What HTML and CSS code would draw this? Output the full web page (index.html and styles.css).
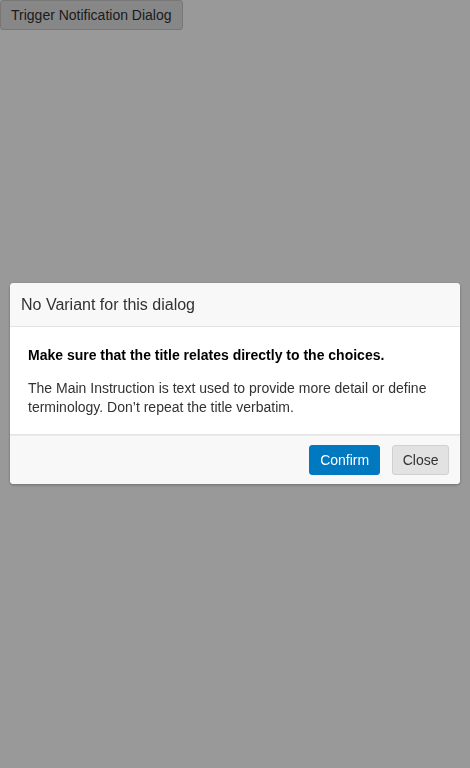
FILE: index.html
```html
<!DOCTYPE html>
<html>
<head>
<meta charset="utf-8">
<link rel="stylesheet" href="styles.css">
</head>
<body>
<button class="trigger">Trigger Notification Dialog</button>
<div class="overlay">
  <div class="dialog">
    <div class="dialog-header">No Variant for this dialog</div>
    <div class="dialog-body">
      <p class="main">Make sure that the title relates directly to the choices.</p>
      <p class="desc">The Main Instruction is text used to provide more detail or define terminology. Don’t repeat the title verbatim.</p>
    </div>
    <div class="dialog-footer">
      <button class="btn btn-primary">Confirm</button>
      <button class="btn btn-secondary">Close</button>
    </div>
  </div>
</div>
</body>
</html>
```
FILE: styles.css
```css
html, body {
  margin: 0;
  padding: 0;
  height: 100%;
}
body {
  font-family: "Liberation Sans", Arial, sans-serif;
  background: #fff;
  color: #000;
}
.trigger {
  font-family: inherit;
  font-size: 14px;
  color: #303030;
  background: #e2e2e2;
  border: 1px solid #c6c6c6;
  border-radius: 3px;
  height: 30px;
  padding: 0 10px;
  margin: 0;
}
.overlay {
  position: fixed;
  inset: 0;
  background: rgba(0, 0, 0, 0.4);
  display: flex;
  align-items: flex-start;
  justify-content: center;
  padding-top: 283px;
}
.dialog {
  width: 450px;
  background: #fff;
  border-radius: 4px;
  box-shadow: 0 1px 3px rgba(0, 0, 0, 0.3);
  overflow: hidden;
}
.dialog-header {
  background: #f8f8f8;
  border-bottom: 1px solid #e4e4e4;
  font-size: 16px;
  color: #323232;
  height: 43px;
  line-height: 43px;
  padding: 0 11px;
}
.dialog-body {
  padding: 19px 18px 17px;
  border-bottom: 1px solid #e4e4e4;
  font-size: 14px;
  line-height: 19px;
  color: #323232;
}
.dialog-body p {
  margin: 0;
}
.dialog-body .main {
  font-weight: bold;
  color: #000;
  margin-bottom: 14px;
}
.dialog-footer {
  background: #f8f8f8;
  border-top: 1px solid #ececec;
  display: flex;
  justify-content: flex-end;
  gap: 12px;
  padding: 9px 11px 9px;
}
.btn {
  font-family: inherit;
  font-size: 14px;
  height: 30px;
  border-radius: 3px;
  padding: 0 10px;
  margin: 0;
}
.btn-primary {
  background: #0079c1;
  border: 1px solid #0079c1;
  color: #fff;
}
.btn-secondary {
  background: #e2e2e2;
  border: 1px solid #d0d0d0;
  color: #323232;
  padding: 0 9.5px;
}
```
